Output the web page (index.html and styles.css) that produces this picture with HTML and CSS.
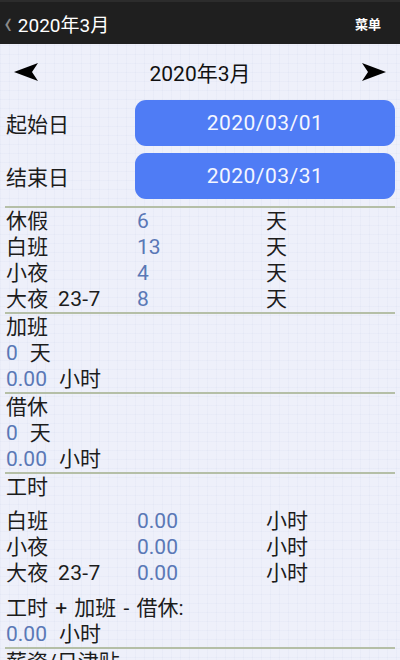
FILE: index.html
```html
<!DOCTYPE html>
<html lang="zh-CN">
<head>
<meta charset="utf-8">
<title>2020年3月</title>
<link rel="stylesheet" href="styles.css">
</head>
<body>
<header class="topbar">
  <div class="topbar-left">
    <span class="back">‹</span>
    <span class="topbar-title">2020年3月</span>
  </div>
  <span class="menu">菜单</span>
</header>

<main class="page">
  <div class="month-nav">
    <svg class="arrow" viewBox="0 0 26 20" width="26" height="20"><path d="M1 10 L25 1 L19 10 L25 19 Z" fill="#000"/></svg>
    <span class="month-title">2020年3月</span>
    <svg class="arrow" viewBox="0 0 26 20" width="26" height="20"><path d="M25 10 L1 1 L7 10 L1 19 Z" fill="#000"/></svg>
  </div>

  <div class="date-row">
    <span class="date-label">起始日</span>
    <button class="date-btn">2020/03/01</button>
  </div>
  <div class="date-row">
    <span class="date-label">结束日</span>
    <button class="date-btn">2020/03/31</button>
  </div>

  <section class="block">
    <div class="row"><span class="c1">休假</span><span class="c2 val">6</span><span class="c3">天</span></div>
    <div class="row"><span class="c1">白班</span><span class="c2 val">13</span><span class="c3">天</span></div>
    <div class="row"><span class="c1">小夜</span><span class="c2 val">4</span><span class="c3">天</span></div>
    <div class="row"><span class="c1">大夜 23-7</span><span class="c2 val">8</span><span class="c3">天</span></div>
  </section>

  <section class="block">
    <div class="line">加班</div>
    <div class="line"><span class="val pair">0</span>天</div>
    <div class="line"><span class="val pair">0.00</span>小时</div>
  </section>

  <section class="block">
    <div class="line">借休</div>
    <div class="line"><span class="val pair">0</span>天</div>
    <div class="line"><span class="val pair">0.00</span>小时</div>
  </section>

  <section class="block">
    <div class="line">工时</div>
    <div class="hours">
      <div class="row"><span class="c1">白班</span><span class="c2 val">0.00</span><span class="c3">小时</span></div>
      <div class="row"><span class="c1">小夜</span><span class="c2 val">0.00</span><span class="c3">小时</span></div>
      <div class="row"><span class="c1">大夜 23-7</span><span class="c2 val">0.00</span><span class="c3">小时</span></div>
    </div>
    <div class="line formula">工时 + 加班 - 借休:</div>
    <div class="line"><span class="val pair">0.00</span>小时</div>
  </section>

  <section class="block">
    <div class="line">薪资/日津贴</div>
  </section>
</main>
</body>
</html>
```

FILE: styles.css
```css
* {
  box-sizing: border-box;
}

html, body {
  margin: 0;
  padding: 0;
}

body {
  width: 400px;
  height: 660px;
  overflow: hidden;
  font-family: Roboto, "Noto Sans CJK SC", sans-serif;
  color: #1c1c1c;
  background-color: #eef0fa;
  background-image:
    linear-gradient(to right, rgba(200, 206, 230, 0.13) 1px, transparent 1px),
    linear-gradient(to bottom, rgba(200, 206, 230, 0.13) 1px, transparent 1px);
  background-size: 9px 9px;
}

/* top action bar */
.topbar {
  height: 44px;
  background: #1f1f1f;
  border-top: 2px solid #2c2c2c;
  display: flex;
  align-items: center;
  justify-content: space-between;
  padding: 0 19px 0 4px;
}

.topbar-left {
  display: flex;
  align-items: center;
  gap: 6px;
}

.back {
  color: #8a8a8a;
  font-size: 26px;
  line-height: 1;
  margin-top: -3px;
  transform: scaleY(1.2);
}

.topbar-title {
  color: #fff;
  font-size: 19px;
}

.menu {
  color: #fff;
  font-size: 13px;
  font-weight: bold;
}

/* content */
.page {
  padding: 0 5px 0 5px;
}

.month-nav {
  height: 56px;
  display: flex;
  align-items: center;
  justify-content: space-between;
  padding: 0 8px;
}

.arrow {
  display: block;
}

.month-title {
  font-size: 21px;
  color: #111;
}

.date-row {
  display: flex;
  align-items: center;
  margin-bottom: 7px;
}

.date-label {
  width: 130px;
  padding-left: 1px;
  font-size: 21px;
}

.date-btn {
  flex: 1;
  height: 46px;
  border: none;
  border-radius: 11px;
  background: #4f7cf5;
  color: #f4f6ff;
  font-family: Roboto, "Noto Sans CJK SC", sans-serif;
  font-size: 21px;
  letter-spacing: 0.5px;
  padding: 0;
}

.block {
  border-top: 2px solid #b5bfa7;
  padding-left: 1px;
}

.row {
  display: grid;
  grid-template-columns: 131px 129px 1fr;
  height: 26px;
  line-height: 26px;
  font-size: 21px;
  white-space: nowrap;
}

.c1 {
  word-spacing: 4px;
  letter-spacing: 0.3px;
}

.line {
  height: 26px;
  line-height: 26px;
  font-size: 21px;
  white-space: nowrap;
}

.formula {
  word-spacing: 2px;
}

.val {
  color: #5a78b6;
}

.pair {
  margin-right: 12px;
}

.hours {
  margin-top: 8px;
  margin-bottom: 9px;
}
```
